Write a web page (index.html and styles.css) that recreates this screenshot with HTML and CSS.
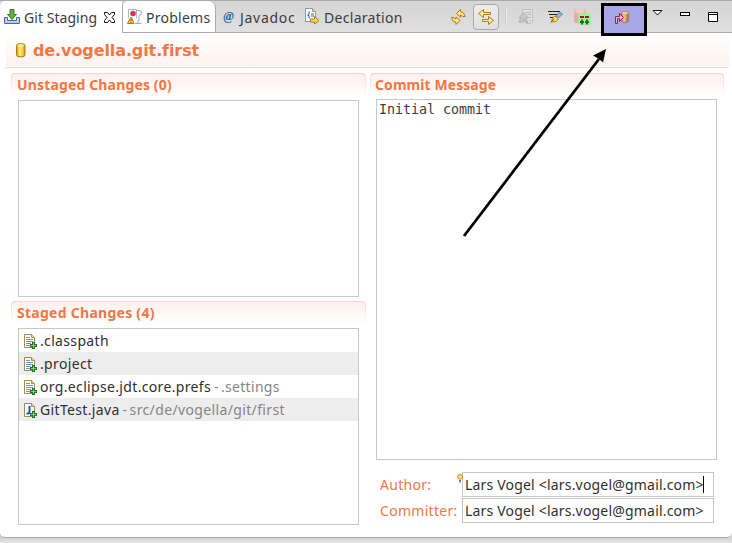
FILE: index.html
```html
<!DOCTYPE html>
<html lang="en">
<head>
<meta charset="utf-8">
<title>Git Staging</title>
<link rel="stylesheet" href="styles.css">
</head>
<body>
<svg width="0" height="0" class="defs">
  <defs>
    <linearGradient id="gold"><stop offset="0" stop-color="#d89a10"/><stop offset=".4" stop-color="#ffee80"/><stop offset="1" stop-color="#e0a818"/></linearGradient>
    <linearGradient id="bronze"><stop offset="0" stop-color="#b87848"/><stop offset=".35" stop-color="#eccb9c"/><stop offset="1" stop-color="#a86838"/></linearGradient>
    <symbol id="doc" viewBox="0 0 14 15">
      <path d="M.5.5H7.500L10.500 3.500V13.500H.5Z" fill="#fff" stroke="#a08c50"/>
      <path d="M7.500.5V3.500H10.500" fill="#e6cf86" stroke="#b29445"/>
      <path d="M2 3.500H6M2 5.500H9M2 7.500H9M2 9.500H7M2 11.500H6" stroke="#7791bf"/>
      <path d="M9.500 8V15M6 11.500H13" stroke="#22702f" stroke-width="3"/>
      <path d="M9.500 9V14M7 11.500H12" stroke="#84d05e"/>
    </symbol>
    <symbol id="jdoc" viewBox="0 0 14 15">
      <path d="M.5.5H7.500L10.500 3.500V13.500H.5Z" fill="#f5faff" stroke="#a08c50"/>
      <path d="M7.500.5V3.500H10.500" fill="#e6cf86" stroke="#b29445"/>
      <path d="M5.500 3V9Q5.500 11 2.500 10.500" fill="none" stroke="#205a91" stroke-width="2"/>
      <path d="M9.500 8V15M6 11.500H13" stroke="#22702f" stroke-width="3"/>
      <path d="M9.500 9V14M7 11.500H12" stroke="#84d05e"/>
    </symbol>
  </defs>
</svg>
<div class="view">
  <header class="tabbar">
    <div class="tab active">
      <svg class="i-git" width="16" height="16"><path d="M.5 8.500H3.500V11.500H12.500V8.500H15.500V14.500H.5Z" fill="#b8d0ee" stroke="#4769a0"/><path d="M6 .5H10V5.500H12.500L8 10.500L3.500 5.500H6Z" fill="#62ad43" stroke="#397d28"/></svg>
      <span class="t-git">Git Staging</span>
      <svg class="i-close" width="11" height="11"><path d="M.5.5H3.500L5.500 3L7.500.5H10.500V2.500L8 5.500L10.500 8.500V10.500H7.500L5.500 8L3.500 10.500H.5V8.500L3 5.500L.5 2.500Z" fill="#fff" stroke="#111"/></svg>
    </div>
    <div class="tab second">
      <svg class="i-prob" width="16" height="17"><path d="M1.500 10V1.500H9.500V10" fill="#fff" stroke="#9cb9d9"/><path d="M9 2.500H12.500Q14.500 3 14.500 5Q14 7 12 7.500V13M8 15.500H14.500M11 12V15" fill="none" stroke="#90adcf"/><circle cx="6" cy="5.500" r="2.800" fill="#df3448"/><path d="M3.500 9.500L.5 15.500H7L4.500 9.500Z" fill="#ffcf55" stroke="#b87710"/><path d="M4 11V13M4 14V15" stroke="#6c3e00"/></svg>
      <span class="t-prob">Problems</span>
    </div>
    <div class="tab third">
      <span class="at">@</span><span class="t-javadoc">Javadoc</span>
      <svg class="i-decl" width="15" height="17"><path d="M.5.500H7.500L10.500 3.500V13.500H.5Z" fill="#f7faff" stroke="#879bb0"/><path d="M7.500.5V3.500H10.500" fill="#ecd28a" stroke="#b99a4b"/><path d="M5 4H4V6.500L2.500 7L4 7.500V10H5M6 6H9M6 8H9" fill="none" stroke="#3466a4"/><path d="M5.500 11H9.500V8.500L14 12.500L9.500 16V14H5.500Z" fill="#ffd65b" stroke="#b17c10"/></svg>
      <span class="t-decl">Declaration</span>
    </div>
    <div class="tools">
      <svg class="i-sync" width="15" height="16"><path d="M5.500 4.500L9.500.5V2.500Q13.500 3 14 7.500H11.500Q11 6 9.500 6V8Z" fill="#ffe896" stroke="#b57910"/><path d="M9 11.500L5 15.500V13.500Q1 13 .5 8.500H3Q3.500 10 5 10V8Z" fill="#ffe896" stroke="#b57910"/></svg>
      <span class="toggle"><svg width="16" height="17"><path d="M.5 4.500L5.500.5V3.500H12.500V5.500H5.500V8.500Z" fill="#fff0a8" stroke="#b57910"/><path d="M15.500 11.500L10.500 7.500V10.500H4.500V12.500H10.500V15.500Z" fill="#fff0a8" stroke="#b57910"/></svg></span>
      <span class="sep"></span>
      <svg class="i-gray" width="16" height="16"><path d="M4.500 5V.5H14.500V12Q14 14.500 12 14.500H10" fill="#e0e0e0" stroke="#c2c2c2"/><path d="M7 3.500H13M9 5.500H13M10 8.500H13M11 11.500H13" stroke="#b9b9b9"/><path d="M5.500 3.500L1 9H3L1 13H5L6 10L8 14H10L7.500 9H10Z" fill="#c9c9c9" stroke="#b0b0b0"/></svg>
      <svg class="i-sign" width="15" height="14"><path d="M0 1.500H12M1 4.500H10M2 7.500H6" stroke="#222"/><path d="M8 6L11.500 2L14.500 4L10.500 8Z" fill="#8eb7ec" stroke="#5a86c6"/><path d="M7 6L10.500 9L8 11.500L3.500 12L4.500 8Z" fill="#ffd965" stroke="#bf891b"/><path d="M3 12.500L6 9" stroke="#765019"/></svg>
      <svg class="i-change" width="17" height="18"><rect width="12" height="14" rx="2" fill="#f7a5a8"/><ellipse cx="6" cy="2" rx="5" ry="2" fill="#ffc6c6"/><rect x="4" y="4" width="13" height="12" rx="1.500" fill="#9cf09a"/><path d="M6 8H10M11 8H15" stroke="#b0101c" stroke-width="2"/><path d="M8 10.500V15.500M6 13H10M13 10.500V15.500M11 13H15" stroke="#087b1c" stroke-width="2"/></svg>
      <span class="highlight"><svg width="15" height="14"><rect x="6.500" y=".5" width="7" height="11" rx="2.500" fill="url(#bronze)" stroke="#ad7850"/><ellipse cx="10" cy="2" rx="3" ry="1.300" fill="#eed0a5"/><path d="M.5 12.500V5.500H4.500V2.500L8.500 6.500L4.500 10.500V7.500H2.500V12.500Z" fill="#d5b9dc" stroke="#af1454"/></svg></span>
      <svg class="i-menu" width="11" height="6"><path d="M1 .5H10L5.500 5Z" fill="#fff" stroke="#111"/></svg>
      <svg class="i-min" width="11" height="5"><rect x=".5" y=".5" width="9" height="3" fill="#fff" stroke="#000"/></svg>
      <svg class="i-max" width="11" height="11"><path d="M.5.5H9.500V9.500H.5ZM1 2.500H9" fill="#fff" stroke="#000"/></svg>
    </div>
  </header>
  <main class="form">
    <div class="repo">
      <svg width="10" height="15"><rect x=".5" y=".8" width="8.500" height="13" rx="2.500" fill="url(#gold)" stroke="#a87808"/><ellipse cx="4.700" cy="2.500" rx="3.200" ry="1.200" fill="#ffef94"/></svg>
      <h1>de.vogella.git.first</h1>
    </div>
    <div class="columns">
      <div class="left">
        <section>
          <h2 class="head"><span class="t-unstaged">Unstaged Changes (0)</span></h2>
          <div class="list"></div>
        </section>
        <section>
          <h2 class="head"><span class="t-staged">Staged Changes (4)</span></h2>
          <ul class="list">
            <li><svg width="14" height="15"><use href="#doc"/></svg><span class="f-class">.classpath</span></li>
            <li><svg width="14" height="15"><use href="#doc"/></svg><span class="f-proj">.project</span></li>
            <li><svg width="14" height="15"><use href="#doc"/></svg><span class="f-prefs">org.eclipse.jdt.core.prefs</span><span class="path p-set"><span class="dash">-</span>.settings</span></li>
            <li><svg width="14" height="15"><use href="#jdoc"/></svg><span class="f-java">GitTest.java</span><span class="path p-src"><span class="dash">-</span>src/de/vogella/git/first</span></li>
          </ul>
        </section>
      </div>
      <div class="right">
        <h2 class="head"><span class="t-commit">Commit Message</span></h2>
        <div class="message">Initial commit</div>
        <div class="person"><span class="label t-author">Author:</span><span class="field">Lars Vogel &lt;lars.vogel@gmail.com&gt;<i class="caret"></i></span>
          <svg class="bulb" width="6" height="9"><path d="M1.500 5L.5 3Q.5.500 3 .5T5.500 3L4.500 5Z" fill="#ffe89a" stroke="#d98412"/><path d="M2 6.500H4M2 8H4" stroke="#34679b"/></svg></div>
        <div class="person"><span class="label t-committer">Committer:</span><span class="field">Lars Vogel &lt;lars.vogel@gmail.com&gt;</span></div>
      </div>
    </div>
  </main>
</div>
<svg class="pointer" width="148" height="194"><path d="M2 188L137 11" stroke="#000" stroke-width="2.800"/><path d="M144 1L131 7.500L137 11L141 14.500Z"/></svg>
</body>
</html>
```
FILE: styles.css
```css
* { box-sizing: border-box; }
body { margin: 0; width: 732px; height: 543px; overflow: hidden; position: relative; background: linear-gradient(#d2d2d2 537px, #e5e5e5 543px); font-family: "Noto Sans", sans-serif; font-size: 14px; color: #3c3c3c; }
svg { display: block; flex: none; overflow: visible; }
.defs { position: absolute; }
h1, h2, ul { margin: 0; padding: 0; }
span { white-space: nowrap; }
.view { width: 732px; height: 538px; background: #fff; border-bottom: 1px solid #aaa; border-radius: 0 0 5px 5px; overflow: hidden; }
.tabbar { display: flex; height: 33px; border-top: 1px solid #ababab; background: linear-gradient(#d5d5d5, #dfdfdf); line-height: 32px; }
.tab { display: flex; align-items: center; height: 32px; }
.t-git, .t-prob, .t-javadoc, .t-decl { padding-top: 2px; }
.active { width: 122px; background: #fff; padding-left: 4px; border-radius: 5px 0 0 0; }
.second { width: 94px; background: #fff; border: 1px solid #a9a9b4; border-top-width: 0; border-radius: 5px 7px 0 0; padding-left: 4px; }
.third, .tools { border-bottom: 1px solid #aaa; }
.third { width: 220px; padding-left: 7px; }
.i-git { margin-right: 4px; }
.i-close { margin-left: 6px; }
.i-prob { margin-right: 3px; }
.at { width: 17px; font: bold 12px "Liberation Serif", serif; color: #236496; }
.i-decl { margin-right: 4px; }
.t-git { width: 74px; letter-spacing: .05px; }
.t-prob { letter-spacing: .25px; }
.t-javadoc { width: 65px; letter-spacing: .7px; }
.t-decl { letter-spacing: .3px; }
.tools { display: flex; flex: 1; align-items: flex-start; height: 32px; }
.i-sync { margin: 8px 0 0 15px; }
.toggle { display: flex; align-items: center; justify-content: center; width: 26px; height: 26px; margin: 3px 0 0 7px; border: 1px solid #aaa; border-radius: 4px; background: linear-gradient(#ededed, #e0e0e0); }
.toggle svg { margin-top: 1px; }
.sep { width: 2px; height: 15px; margin: 7px 0 0 6px; background: #ececec; border-left: 1px solid #c9c9c9; }
.i-gray { margin: 8px 0 0 11px; }
.i-sign { margin: 9px 0 0 14px; }
.i-change { margin: 8px 0 0 11px; }
.highlight { display: flex; align-items: flex-start; width: 46px; height: 33px; margin: 2px 0 0 10px; padding: 5px 0 0 11px; border: 3px solid #000; background: #a7a7e5; position: relative; z-index: 1; }
.i-menu { margin: 9px 0 0 5px; }
.i-min { margin: 11px 0 0 17px; }
.i-max { margin: 11px 0 0 17px; }
.form { padding: 1px 3px 0 6px; }
.repo { display: flex; align-items: center; height: 34px; padding: 0 0 1px 10px; border-bottom: 1px solid #f6d6cb; background: linear-gradient(#fff, #fdf1ed); box-shadow: inset 0 -1px #fff; }
.repo h1 { margin: 2px 0 0 7px; font: bold 16px/20px "DejaVu Sans", sans-serif; letter-spacing: -.1px; color: #f07746; }
.columns { display: flex; gap: 4px; padding: 5px 5px 0; }
.left { width: 355px; }
.right { width: 354px; }
.head { height: 24px; padding-left: 5px; border: 1px solid transparent; border-top-color: #f7d5ca; border-radius: 4px 4px 0 0; background: linear-gradient(#fdf0ec, #fff) padding-box, linear-gradient(#f7d5ca, #fff) border-box; color: #f07746; font: bold 14px/21px "Noto Sans", sans-serif; }
.right .head { padding-left: 4px; }
.t-unstaged { letter-spacing: .15px; }
.t-staged { letter-spacing: .27px; }
.t-commit { letter-spacing: .07px; }
.list { width: 341px; height: 197px; margin: 3px 0 0 7px; border: 1px solid #c7c7c7; list-style: none; }
section + section { margin-top: 4px; }
.list li { display: flex; align-items: center; height: 23px; padding-left: 5px; line-height: 23px; color: #303030; letter-spacing: .34px; }
.list li svg { margin-right: 2px; margin-top: 1px; }
.list li:nth-child(even) { background: #ededed; }
.list .path { color: #858585; margin-left: 3px; letter-spacing: .36px; }
.dash { display: inline-block; width: 7px; }
.list .p-set { letter-spacing: .3px; }
.message { width: 341px; height: 361px; margin: 2px 0 12px 6px; padding: 0 2px; border: 1px solid #c7c7c7; font: 13.300px/19px "DejaVu Sans Mono", monospace; }
.person { display: flex; align-items: center; height: 25px; padding-left: 10px; margin-bottom: 1px; position: relative; }
.label { width: 82px; color: #f07746; letter-spacing: .3px; }
.field { width: 252px; height: 25px; padding-left: 2px; border: 1px solid #c7c7c7; line-height: 23px; color: #303030; display: flex; align-items: center; letter-spacing: .19px; }
.caret { width: 1px; height: 17px; margin-left: -1px; background: #000; }
.bulb { position: absolute; left: 87px; top: 2px; }
.pointer { position: absolute; left: 462px; top: 48px; }
```
